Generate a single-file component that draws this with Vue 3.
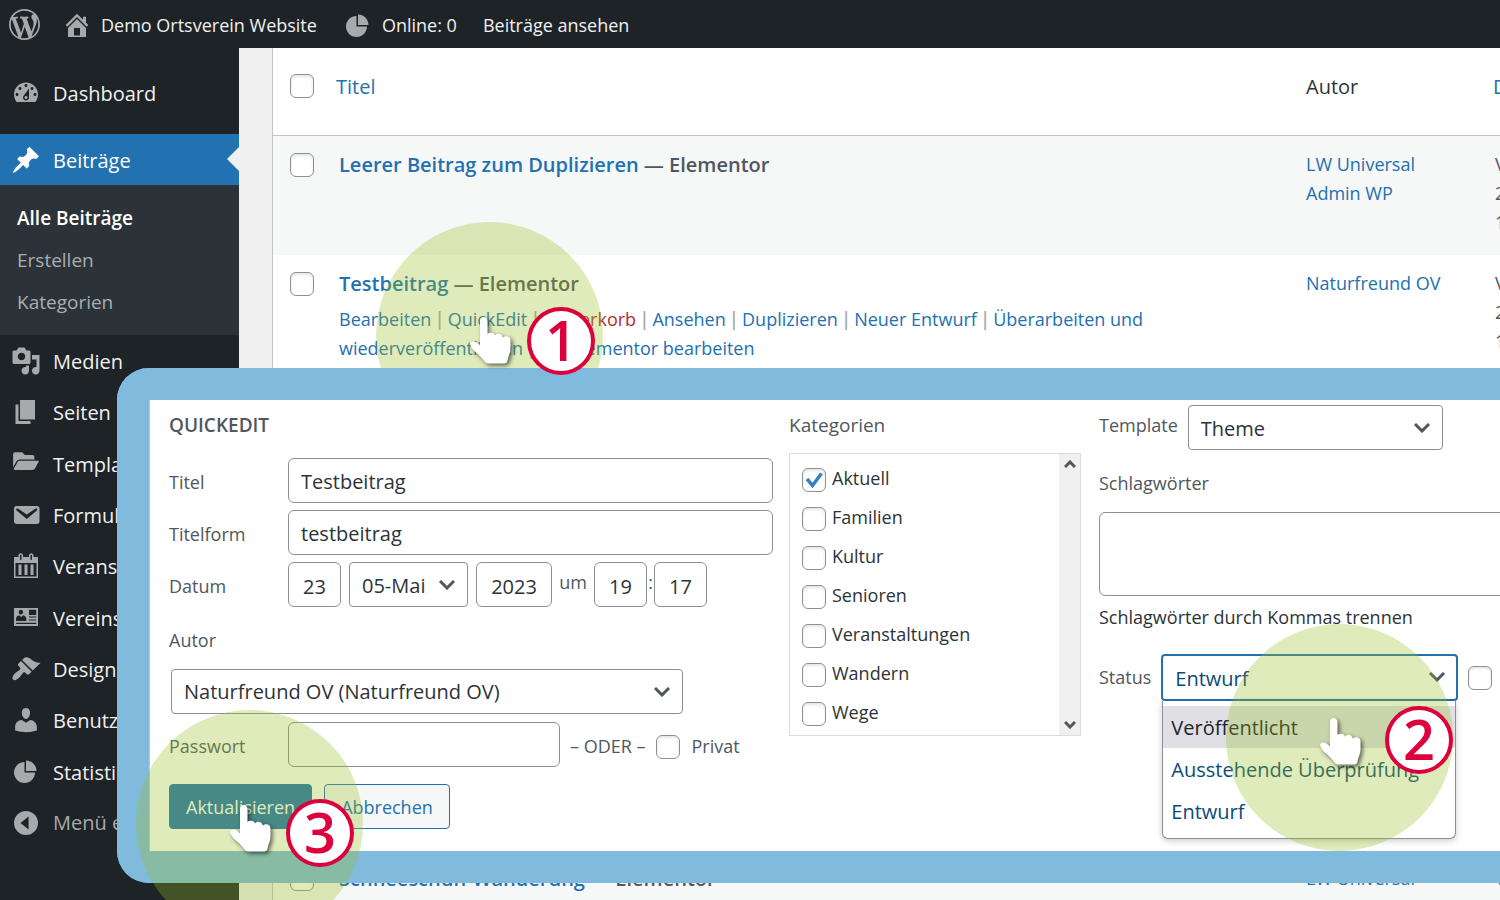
<script setup>
import { ref } from 'vue'

const icons = {
  wordpress: 'M20 10c0-5.51-4.49-10-10-10C4.48 0 0 4.49 0 10c0 5.52 4.48 10 10 10 5.51 0 10-4.48 10-10zM7.78 15.37L4.37 6.22c.55-.02 1.17-.08 1.17-.08.5-.06.44-1.13-.06-1.11 0 0-1.45.11-2.37.11-.18 0-.37 0-.58-.01C4.12 2.69 6.87 1.11 10 1.11c2.33 0 4.45.87 6.05 2.34-.68-.11-1.65.39-1.65 1.58 0 .74.45 1.36.9 2.1.35.61.55 1.36.55 2.46 0 1.49-1.4 5-1.4 5l-3.03-8.37c.54-.02.82-.17.82-.17.5-.05.44-1.25-.06-1.22 0 0-1.44.12-2.38.12-.87 0-2.33-.12-2.33-.12-.5-.03-.56 1.2-.06 1.22l.92.08 1.26 3.41zM17.41 10c.24-.64.74-1.87.43-4.25.7 1.29 1.05 2.71 1.05 4.25 0 3.29-1.73 6.24-4.4 7.78.97-2.59 1.94-5.2 2.92-7.78zM6.1 18.09C3.12 16.65 1.11 13.53 1.11 10c0-1.3.23-2.48.72-3.59C3.25 10.3 4.67 14.2 6.1 18.09zm4.03-6.63l2.58 6.98c-.86.29-1.76.45-2.71.45-.79 0-1.57-.11-2.29-.33.81-2.38 1.62-4.74 2.42-7.1z',
  home: 'M16 8.5l1.53 1.53-1.06 1.06L10 4.6l-6.47 6.49-1.06-1.06L10 2.5l4 4v-2h2v4zm-6-2.46l6 5.99V18H4v-5.97zM12 17v-5H8v5h4z',
  pie: 'M10 10V3c3.87 0 7 3.13 7 7h-7zM9 4v7h7c0 3.87-3.13 7-7 7s-7-3.13-7-7 3.13-7 7-7z',
  dashboard: 'M3.76 16h12.48c1.1-1.37 1.76-3.11 1.76-5 0-4.42-3.58-8-8-8s-8 3.58-8 8c0 1.89.66 3.63 1.76 5zM10 4c.55 0 1 .45 1 1s-.45 1-1 1-1-.45-1-1 .45-1 1-1zM6 6c.55 0 1 .45 1 1s-.45 1-1 1-1-.45-1-1 .45-1 1-1zm8 0c.55 0 1 .45 1 1s-.45 1-1 1-1-.45-1-1 .45-1 1-1zm-5.37 5.55L12 7v6c0 1.1-.9 2-2 2s-2-.9-2-2c0-.57.24-1.08.63-1.45zM4 10c.55 0 1 .45 1 1s-.45 1-1 1-1-.45-1-1 .45-1 1-1zm12 0c.55 0 1 .45 1 1s-.45 1-1 1-1-.45-1-1 .45-1 1-1zm-5 3c0-.55-.45-1-1-1s-1 .45-1 1 .45 1 1 1 1-.45 1-1z',
  pin: 'M10.44 3.02l1.82-1.82 6.36 6.35-1.83 1.82c-1.05-.68-2.48-.57-3.41.36l-.75.75c-.92.93-1.04 2.35-.35 3.41l-1.83 1.82-2.41-2.41-2.8 2.79c-.42.42-3.38 2.71-3.8 2.29s1.86-3.39 2.28-3.81l2.79-2.79L4.1 9.36l1.83-1.82c1.05.69 2.48.57 3.4-.36l.75-.75c.93-.92 1.05-2.35.36-3.41z',
  media: 'M13 11V4c0-.55-.45-1-1-1h-1.67L9 1H5L3.67 3H2c-.55 0-1 .45-1 1v7c0 .55.45 1 1 1h10c.55 0 1-.45 1-1zM7 4.5c1.38 0 2.5 1.12 2.5 2.5S8.38 9.5 7 9.5 4.5 8.38 4.5 7 5.62 4.5 7 4.5zM14 6h5v10.5c0 1.38-1.12 2.5-2.5 2.5S14 17.88 14 16.5s1.12-2.5 2.5-2.5c.17 0 .34.02.5.05V9h-3V6zm-4 8.05V13h2v3.5c0 1.38-1.12 2.5-2.5 2.5S7 17.88 7 16.5 8.12 14 9.5 14c.17 0 .34.02.5.05z',
  page: 'M6 15V2h10v13H6zm-1 1h8v2H3V5h2v11z',
  folder: 'M18.4 9.2l-2.3 4.3c-.4.7-1.1 1.1-1.9 1.1H2.6c-.6 0-.9-.6-.6-1.1l2.3-4c.4-.7 1-1 1.8-1h11.7c.6 0 .9.3.6.7zM6 7.6h9.6V6c0-.8-.6-1.4-1.4-1.4H9.2L7.4 2.8H2.8c-.8 0-1.4.6-1.4 1.4v8.6L3.6 9c.5-.9 1.4-1.4 2.4-1.4z',
  mail: 'M3.87 4h13.25C18.37 4 19 4.59 19 5.79v8.42c0 1.19-.63 1.79-1.88 1.79H3.87c-1.25 0-1.88-.6-1.88-1.79V5.79c0-1.2.63-1.79 1.88-1.79zm6.62 8.6l6.74-5.53c.24-.2.43-.66.13-1.07-.29-.41-.82-.42-1.17-.17l-5.7 3.86L4.8 5.83c-.35-.25-.88-.24-1.17.17-.3.41-.11.87.13 1.07z',
  calendar: 'M15 4h3v14H2V4h3V3c0-.83.67-1.5 1.5-1.5S8 2.17 8 3v1h4V3c0-.83.67-1.5 1.5-1.5S15 2.17 15 3v1zM6 3v2.5c0 .28.22.5.5.5s.5-.22.5-.5V3c0-.28-.22-.5-.5-.5S6 2.72 6 3zm7 0v2.5c0 .28.22.5.5.5s.5-.22.5-.5V3c0-.28-.22-.5-.5-.5s-.5.22-.5.5zm4 14V8H3v9h14zM7 16V9H5v7h2zm4 0V9H9v7h2zm4 0V9h-2v7h2z',
  card: 'M2 4h16v12H2zM6.6 5.2a1.4 1.5 0 0 0 0 3.2 1.4 1.5 0 0 0 0-3.2zM3.4 12.6h6.8v-1.4c0-1.3-.9-2.2-2-2.4L6.8 10 5.4 8.8c-1.1.2-2 1.1-2 2.4zM12 5.2v3.4h4.8V5.2zM12 9.6v.8h4.8v-.8zM12 11.6v.8h4.8v-.8zM3.4 13.9v.8h13.4v-.8z',
  brush: 'M14.48 11.06L7.41 3.99l1.5-1.5c.5-.56 2.3-.47 3.51.32 1.21.8 1.43 1.28 2.91 2.1 1.18.64 2.45 1.26 4.45.85zm-.71.71L6.7 4.7 4.93 6.47c-.39.39-.39 1.02 0 1.41l1.06 1.06c.39.39.39 1.03 0 1.42-.6.6-1.43 1.11-2.21 1.69-.35.26-.7.53-1.01.84C1.43 14.23.4 16.08 1.4 17.07c.99 1 2.84-.03 4.18-1.36.31-.31.58-.66.85-1.02.57-.78 1.08-1.61 1.69-2.21.39-.39 1.02-.39 1.41 0l1.06 1.06c.39.39 1.02.39 1.41 0z',
  user: 'M10 9.25c-2.27 0-2.73-3.44-2.73-3.44C7 4.02 7.82 2 9.97 2c2.16 0 2.98 2.02 2.71 3.81 0 0-.41 3.44-2.68 3.44zm0 2.57L12.72 10c2.39 0 4.52 2.33 4.52 4.53v2.49s-3.65 1.13-7.24 1.13c-3.65 0-7.24-1.13-7.24-1.13v-2.49c0-2.25 1.94-4.48 4.47-4.48z',
  collapse: 'M10 2a8 8 0 1 1 0 16 8 8 0 0 1 0-16zM11.7 5.6v8.8L6.3 10z',
}

const menu = [
  { label: 'Medien', icon: 'media' },
  { label: 'Seiten', icon: 'page' },
  { label: 'Templates', icon: 'folder' },
  { label: 'Formulare', icon: 'mail' },
  { label: 'Veranstaltungen', icon: 'calendar' },
  { label: 'Vereinsdaten', icon: 'card' },
  { label: 'Design', icon: 'brush' },
  { label: 'Benutzer', icon: 'user' },
  { label: 'Statistiken', icon: 'pie' },
]

const rows = [
  { title: 'Leerer Beitrag zum Duplizieren', author: 'LW Universal Admin WP', size: 'short' },
  {
    title: 'Testbeitrag',
    author: 'Naturfreund OV',
    size: 'tall',
    actions: ['Bearbeiten', 'QuickEdit', 'Papierkorb', 'Ansehen', 'Duplizieren', 'Neuer Entwurf', 'Überarbeiten und wiederveröffentlichen', 'Mit Elementor bearbeiten'],
  },
  { title: 'Schneeschuh-Wanderung', author: 'LW Universal Admin WP', size: 'short' },
]

const categories = ref([
  { name: 'Aktuell', on: true },
  { name: 'Familien', on: false },
  { name: 'Kultur', on: false },
  { name: 'Senioren', on: false },
  { name: 'Veranstaltungen', on: false },
  { name: 'Wandern', on: false },
  { name: 'Wege', on: false },
])

const form = ref({ title: 'Testbeitrag', slug: 'testbeitrag', day: '23', year: '2023', hour: '19', minute: '17', password: '', tags: '' })
const hand = 'M10 4.5C10 1.5 11.5 0 13.5 0S17.5 1.5 17.5 4.5V17C18.5 15.3 24 14.8 25 18.4C27 15.7 32 16.2 32.8 20.5C35.5 18.2 40 19 40.5 23V32C40.5 36 38.3 39 37.5 43.5C37.2 45.5 36 46.5 34.5 46.5H18.5C16.5 46.5 15.5 45.7 14.5 44.5C11.5 40.5 9.5 38.5 6.5 36C2.5 32.8 1.5 30.5 .3 28C-.5 26 1.7 24 4 24.5C6.2 25 8 26.5 10 28.5Z'
</script>

<template>
  <div class="page">
    <header class="bar">
      <a href="#" class="logo" aria-label="WordPress"><svg viewBox="0 0 20 20"><path :d="icons.wordpress" /></svg></a>
      <a href="#" class="bar-item site"><svg viewBox="0 0 20 20"><path :d="icons.home" /></svg>Demo Ortsverein Website</a>
      <a href="#" class="bar-item"><svg viewBox="0 0 20 20"><path :d="icons.pie" /></svg>Online: 0</a>
      <a href="#" class="bar-item">Beiträge ansehen</a>
    </header>

    <div class="body">
      <nav class="side">
        <a href="#" class="entry"><svg viewBox="0 0 20 20"><path :d="icons.dashboard" /></svg><span>Dashboard</span></a>
        <a href="#" class="entry current"><svg viewBox="0 0 20 20"><path :d="icons.pin" /></svg><span>Beiträge</span></a>
        <div class="sub">
          <a href="#" class="active">Alle Beiträge</a>
          <a href="#">Erstellen</a>
          <a href="#">Kategorien</a>
        </div>
        <div class="group">
          <a v-for="m in menu" :key="m.label" href="#" class="entry">
            <svg viewBox="0 0 20 20"><path fill-rule="evenodd" :d="icons[m.icon]" /></svg><span>{{ m.label }}</span>
          </a>
        </div>
        <button type="button" class="entry collapse"><svg viewBox="0 0 20 20"><path fill-rule="evenodd" :d="icons.collapse" /></svg>Menü einklappen</button>
      </nav>

      <main class="content">
        <table class="posts">
          <colgroup><col class="c-check" /><col /><col class="c-author" /><col class="c-date" /></colgroup>
          <thead>
            <tr>
              <th><input type="checkbox" aria-label="Alle auswählen" /></th>
              <th><a href="#">Titel</a></th>
              <th>Autor</th>
              <th class="date"><a href="#">Datum</a></th>
            </tr>
          </thead>
          <tbody>
            <tr v-for="r in rows" :key="r.title" :class="r.size">
              <td><input type="checkbox" :aria-label="r.title" /></td>
              <td class="title">
                <strong><a href="#">{{ r.title }}</a> — Elementor</strong>
                <div v-if="r.actions" class="actions">
                  <template v-for="(a, i) in r.actions" :key="a"><span v-if="i" class="sep"> | </span><a href="#" :class="{ trash: a === 'Papierkorb' }">{{ a }}</a></template>
                </div>
              </td>
              <td class="by"><a href="#">{{ r.author }}</a></td>
              <td class="date">Veröffentlicht<br />23. Mai 2023<br />19:17</td>
            </tr>
          </tbody>
        </table>
      </main>
    </div>

    <div class="halo halo-1"></div>

    <form class="panel" @submit.prevent>
      <section class="col first">
        <h2>QUICKEDIT</h2>
        <div class="fields">
          <div class="row"><label for="f-title">Titel</label><input id="f-title" v-model="form.title" type="text" class="grow" /></div>
          <div class="row"><label for="f-slug">Titelform</label><input id="f-slug" v-model="form.slug" type="text" class="grow" /></div>
          <div class="row date-row">
            <label for="f-day">Datum</label>
            <input id="f-day" v-model="form.day" type="text" class="two" />
            <span class="select month"><select aria-label="Monat"><option>05-Mai</option></select><svg viewBox="0 0 16 10"><path d="M1 1l7 7 7-7" /></svg></span>
            <input v-model="form.year" type="text" class="four" aria-label="Jahr" />
            <span class="um">um</span>
            <input v-model="form.hour" type="text" class="two" aria-label="Stunde" />
            <span class="colon">:</span>
            <input v-model="form.minute" type="text" class="two" aria-label="Minute" />
          </div>
        </div>
        <label for="f-author" class="block">Autor</label>
        <span class="select author"><select id="f-author"><option>Naturfreund OV (Naturfreund OV)</option></select><svg viewBox="0 0 16 10"><path d="M1 1l7 7 7-7" /></svg></span>
        <div class="row pass">
          <label for="f-pass">Passwort</label>
          <input id="f-pass" v-model="form.password" type="text" class="password" />
          <span class="or">– ODER –</span>
          <input id="f-private" type="checkbox" />
          <label for="f-private" class="private">Privat</label>
        </div>
        <div class="buttons">
          <button type="submit" class="primary">Aktualisieren</button>
          <button type="button" class="secondary">Abbrechen</button>
        </div>
      </section>

      <section class="col">
        <h3>Kategorien</h3>
        <div class="cats">
          <ul>
            <li v-for="c in categories" :key="c.name"><label><input v-model="c.on" type="checkbox" /><span>{{ c.name }}</span></label></li>
          </ul>
          <div class="scroll">
            <svg viewBox="0 0 12 8"><path d="M1 7l5-5 5 5" /></svg>
            <svg viewBox="0 0 12 8"><path d="M1 1l5 5 5-5" /></svg>
          </div>
        </div>
      </section>

      <section class="col third">
        <div class="template-row">
          <label for="f-template">Template</label>
          <span class="select template"><select id="f-template"><option>Theme</option></select><svg viewBox="0 0 16 10"><path d="M1 1l7 7 7-7" /></svg></span>
        </div>
        <label for="f-tags" class="block">Schlagwörter</label>
        <textarea id="f-tags" v-model="form.tags"></textarea>
        <p>Schlagwörter durch Kommas trennen</p>
        <div class="status-row">
          <label for="f-status">Status</label>
          <span class="select status">
            <select id="f-status"><option>Entwurf</option></select><svg viewBox="0 0 16 10"><path d="M1 1l7 7 7-7" /></svg>
            <ul class="options" role="listbox" aria-label="Status">
              <li role="option" class="hover">Veröffentlicht</li>
              <li role="option">Ausstehende Überprüfung</li>
              <li role="option">Entwurf</li>
            </ul>
          </span>
          <input type="checkbox" aria-label="Beitrag oben halten" />
        </div>
      </section>
    </form>

    <div class="halo halo-2"></div>
    <div class="halo halo-3"></div>
    <svg v-for="n in 3" :key="'h' + n" class="hand" :class="'hand-' + n" viewBox="0 0 41 47"><path :d="hand" /></svg>
    <span v-for="n in 3" :key="'s' + n" class="step" :class="'step-' + n">{{ n }}</span>
  </div>
</template>

<style>
body { margin: 0; background: #f0f0f1; }
</style>

<style scoped>
.page {
  position: relative;
  display: flex;
  flex-direction: column;
  height: 100vh;
  overflow: hidden;
  font-family: "Open Sans", "Noto Sans", sans-serif;
  font-size: 18px;
  line-height: 29px;
  color: #2c3338;
}
.page *, .page *::before, .page *::after { box-sizing: border-box; }
a { color: #2271b1; text-decoration: none; }
svg { display: block; flex: none; }
input, select, textarea, button { font: inherit; color: #2c3338; margin: 0; }

/* Admin bar */
.bar { display: flex; align-items: center; flex: none; height: 48px; padding-left: 9px; background: #1d2327; }
.bar a { color: #f0f0f1; white-space: nowrap; }
.bar svg { width: 30px; height: 30px; fill: #a7aaad; }
.logo svg { width: 31px; height: 31px; }
.bar-item { display: flex; align-items: center; gap: 9px; margin-right: 26px; padding-top: 2px; }
.site { margin-left: 22px; }

/* Side menu */
.body { display: flex; flex: 1; min-height: 0; }
.side { flex: none; width: 239px; padding-top: 19px; background: #1d2327; font-size: 20px; }
.entry { display: flex; align-items: center; gap: 12px; min-height: 51px; padding: 0 11px; color: #f0f0f1; white-space: nowrap; }
.entry span { padding-top: 2px; }
.entry svg { width: 30px; height: 30px; fill: #a7aaad; }
.current { position: relative; margin-top: 16px; background: #2271b1; color: #fff; }
.current svg { fill: #fff; }
.current::after { content: ""; position: absolute; right: 0; top: 13px; border: 12px solid transparent; border-left-width: 0; border-right-color: #f0f0f1; }
.sub { padding: 12px 17px; background: #2c3338; font-size: 19px; }
.sub a { display: block; line-height: 42px; color: #a9adb1; }
.sub .active { color: #fff; font-weight: 600; }
.group { display: grid; grid-auto-rows: 1fr; min-height: 462px; }
.collapse { width: 100%; border: 0; background: none; color: #a7aaad; }

/* Post table */
.content { flex: 1; min-width: 0; padding-left: 33px; overflow: hidden; background: #f0f0f1; }
.posts { width: calc(100% + 150px); table-layout: fixed; border-collapse: separate; border-spacing: 0; border-left: 1px solid #c3c4c7; background: #fff; }
.c-check { width: 56px; }
.c-author { width: 189px; }
.c-date { width: 165px; }
th { height: 88px; padding: 0 10px 11px; border-bottom: 1px solid #c3c4c7; font-size: 20px; font-weight: 400; text-align: left; vertical-align: middle; }
th:first-child, td:first-child { padding-left: 17px; padding-right: 0; }
th:nth-child(2) { padding-left: 7px; }
th.date { padding-left: 8px; }
td { padding: 14px 10px; vertical-align: top; }
td:first-child { padding-top: 17px; }
td.by { padding-right: 24px; }
.short td { height: 119px; background: #f6f7f7; }
.tall td { height: 595px; }
.title strong { display: block; font-size: 20px; font-weight: 600; color: #50575e; }
.date { color: #50575e; }
.actions { margin-top: 7px; }
.sep { color: #a7aaad; font-family: "Liberation Sans", Arial, sans-serif; font-size: 20px; line-height: 20px; }
.trash { color: #b32d2e; }

input[type="checkbox"] {
  display: block;
  flex: none;
  appearance: none;
  width: 24px;
  height: 24px;
  border: 1px solid #8c8f94;
  border-radius: 6px;
  background: #fff;
  box-shadow: inset 0 2px 3px rgba(0, 0, 0, 0.1);
}
input[type="checkbox"]:checked {
  background: #fff url("data:image/svg+xml,%3Csvg xmlns='http://www.w3.org/2000/svg' viewBox='0 0 22 22'%3E%3Cpath d='M4 10l5.5 6.5L18.5 4.5' fill='none' stroke='%233582c4' stroke-width='3.5'/%3E%3C/svg%3E") center / 22px no-repeat;
}

/* Quick edit panel */
.panel {
  position: absolute;
  z-index: 2;
  top: 368px;
  left: 117px;
  right: 0;
  display: grid;
  grid-template-columns: 605fr 294fr 401fr;
  gap: 16px;
  padding: 0 0 22px 19px;
  border: 32px solid #80badd;
  border-right: 0;
  border-radius: 32px 0 0 32px;
  background: #fff;
  box-shadow: inset 1px 0 0 #c3c4c7;
  color: #50575e;
}
.col { min-width: 0; }
.first { padding-left: 1px; }
h2, h3 { margin: 0; padding-top: 11px; line-height: 28px; font-size: 19px; font-weight: 400; }
h2 { margin-bottom: 19px; font-weight: 600; }
h3 { margin-bottom: 14px; }
.fields { display: grid; gap: 7px; }
.row { display: flex; align-items: center; }
.row > label:first-child { flex: none; width: 119px; padding-top: 4px; }
input[type="text"], textarea, .select select { height: 45px; border: 1px solid #8c8f94; border-radius: 6px; background: #fff; font-size: 20px; }
input[type="text"] { min-width: 0; padding: 2px 12px 0; }
.grow { flex: 1; }
.row .two { width: 53px; padding: 3px 0 0; text-align: center; }
.row .four { width: 76px; padding: 3px 0 0; text-align: center; }
.um { width: 42px; padding-bottom: 4px; text-align: center; }
.colon { width: 7px; padding-bottom: 4px; text-align: center; }
.select { position: relative; display: block; }
.select select { display: block; width: 100%; appearance: none; padding: 2px 40px 0 12px; border-radius: 4px; }
.select svg { position: absolute; right: 13px; top: 18px; width: 16px; height: 10px; fill: none; stroke: #50575e; stroke-width: 3; pointer-events: none; }
.month { width: 119px; margin: 0 8px; }
.month select { padding-right: 0; }
.block { display: block; line-height: 28px; }
.col > .block { margin-top: 19px; margin-bottom: 15px; }
.author { width: 512px; margin-left: 2px; }
.author select { padding-top: 0; }
.pass { margin-top: 8px; }
.password { width: 272px; }
.or { margin: 0 10px; padding-top: 3px; white-space: nowrap; }
.pass input[type="checkbox"] { margin-top: 4px; }
.private { margin-left: 12px; padding-top: 3px; }
.buttons { display: flex; gap: 12px; margin-top: 17px; }
.buttons button { height: 45px; padding: 1px 16px 0; border: 1px solid #2271b1; border-radius: 4px; white-space: nowrap; }
.buttons .primary { background: #2271b1; color: #fff; }
.buttons .secondary { background: #f6f7f7; color: #2271b1; }

.cats { display: flex; justify-content: space-between; max-width: 292px; border: 1px solid #dcdcde; color: #2c3338; }
.cats ul { margin: 0; padding: 5px 0 3px 12px; list-style: none; }
.cats label { display: flex; align-items: center; gap: 6px; height: 39px; padding-top: 3px; }
.cats span { padding-bottom: 4px; }
.scroll { display: flex; flex-direction: column; align-items: center; justify-content: space-between; width: 21px; padding: 6px 0; background: #f0f0f0; }
.scroll svg { width: 12px; height: 8px; fill: none; stroke: #50575e; stroke-width: 3; }

.template-row { display: flex; gap: 10px; padding-top: 5px; }
.template-row label { padding-top: 6px; }
.template { width: 255px; }
textarea { display: block; width: calc(100% + 24px); margin-right: -24px; resize: none; }
.third textarea { height: 84px; }
.third p { margin: 7px 0 23px; color: #2c3338; line-height: 28px; }
.status-row { display: flex; align-items: center; gap: 10px; margin-bottom: -1px; }
.status { width: 297px; }
.status select { height: 47px; border: 2px solid #2271b1; color: #0a4b78; }
.options {
  position: absolute;
  top: 47px;
  left: 1px;
  right: 2px;
  margin: 0;
  padding: 5px 0 6px;
  list-style: none;
  border: 1px solid #8c8f94;
  border-top: 0;
  border-radius: 0 0 6px 6px;
  background: #fff;
  box-shadow: 0 2px 6px rgba(0, 0, 0, 0.2);
  color: #0a4b78;
  font-size: 20px;
  line-height: 40px;
}
.options li { padding: 2px 8px 0; white-space: nowrap; }
.options .hover { background: #e0dfe6; color: #1d2327; }

/* Tutorial markers */
.halo { position: absolute; z-index: 3; width: 227px; height: 227px; border-radius: 50%; background: rgba(152, 190, 35, 0.31); pointer-events: none; }
.halo-1 { z-index: 1; left: 376px; top: 222px; }
.halo-2 { left: 1226px; top: 624px; }
.halo-3 { left: 136px; top: 710px; }
.hand { position: absolute; z-index: 4; width: 41px; height: 47px; overflow: visible; fill: #fff; filter: drop-shadow(2px 2px 2px rgba(0, 0, 0, 0.6)); pointer-events: none; }
.hand-1 { left: 470px; top: 317px; }
.hand-2 { left: 1320px; top: 718px; }
.hand-3 { left: 230px; top: 805px; }
.step { position: absolute; z-index: 5; width: 68px; height: 68px; border: 4px solid #dc003c; border-radius: 50%; background: #fff; color: #dc003c; font-size: 56px; font-weight: 600; line-height: 56px; text-align: center; }
.step-1 { left: 527px; top: 307px; }
.step-2 { left: 1385px; top: 706px; }
.step-3 { left: 286px; top: 799px; }
</style>
